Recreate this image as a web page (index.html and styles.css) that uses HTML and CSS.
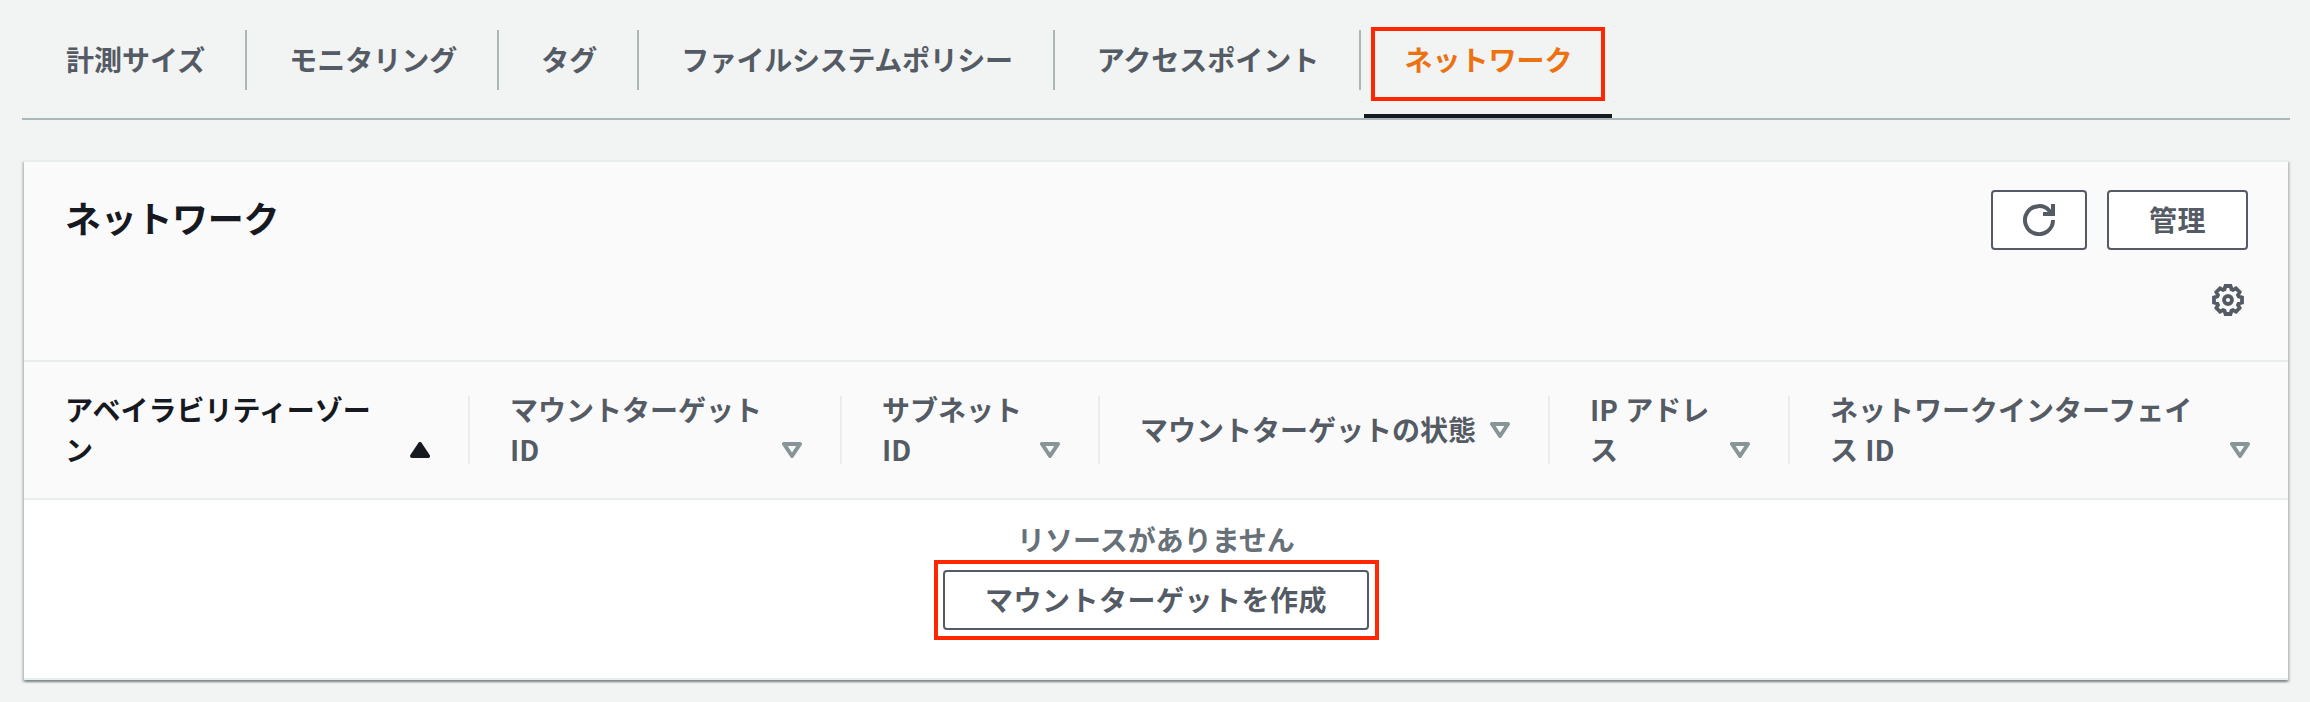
FILE: index.html
```html
<!DOCTYPE html>
<html lang="ja">
<head>
<meta charset="utf-8">
<title>ネットワーク</title>
<link rel="stylesheet" href="styles.css">
</head>
<body>
<nav class="tabs">
  <a class="tab">計測サイズ</a>
  <a class="tab">モニタリング</a>
  <a class="tab">タグ</a>
  <a class="tab tab-long">ファイルシステムポリシー</a>
  <a class="tab">アクセスポイント</a>
  <a class="tab tab-active">ネットワーク<span class="mark mark-tab"></span></a>
</nav>
<section class="card">
  <header class="card-head">
    <div class="title-row">
      <h2 class="title">ネットワーク</h2>
      <div class="actions">
        <button class="btn btn-icon" aria-label="更新">
          <svg class="icon" viewBox="0 0 16 16"><path d="M10 5h5V0M15 8a7 7 0 1 1-1.6-4.4L14.4 5" /></svg>
        </button>
        <button class="btn">管理</button>
      </div>
    </div>
    <div class="tools">
      <svg class="icon gear" viewBox="0 0 32 32"><path d="M13.5 2 18.5 2 19.5 5.3 21 6 24 4.4 27.6 8 26 11 26.7 12.5 30 13.5 30 18.5 26.7 19.5 26 21 27.6 24 24 27.6 21 26 19.5 26.7 18.5 30 13.5 30 12.5 26.7 11 26 8 27.6 4.4 24 6 21 5.3 19.5 2 18.5 2 13.5 5.3 12.5 6 11 4.4 8 8 4.4 11 6 12.5 5.3z"/><circle cx="16" cy="16" r="4"/></svg>
    </div>
  </header>
  <div class="thead">
    <div class="th th-sorted"><span class="label">アベイラビリティーゾー<br>ン</span><svg class="sort" viewBox="0 0 20 16"><path d="M10 2 18 14H2z"/></svg></div>
    <div class="th"><span class="label">マウントターゲット<br><span class="latin">ID</span></span><svg class="sort" viewBox="0 0 20 16"><path d="M2 2h16L10 14z"/></svg></div>
    <div class="th"><span class="label">サブネット<br><span class="latin">ID</span></span><svg class="sort" viewBox="0 0 20 16"><path d="M2 2h16L10 14z"/></svg></div>
    <div class="th"><span class="label">マウントターゲットの状態</span><svg class="sort" viewBox="0 0 20 16"><path d="M2 2h16L10 14z"/></svg></div>
    <div class="th"><span class="label"><span class="latin">IP</span> アドレ<br>ス</span><svg class="sort" viewBox="0 0 20 16"><path d="M2 2h16L10 14z"/></svg></div>
    <div class="th"><span class="label">ネットワークインターフェイ<br>ス <span class="latin">ID</span></span><svg class="sort" viewBox="0 0 20 16"><path d="M2 2h16L10 14z"/></svg></div>
  </div>
  <div class="empty">
    <p class="empty-text">リソースがありません</p>
    <button class="btn btn-create">マウントターゲットを作成<span class="mark mark-create"></span></button>
  </div>
</section>
</body>
</html>
```
FILE: styles.css
```css
* { box-sizing: border-box; }
body {
  margin: 0;
  padding: 0 20px 0 22px;
  height: 702px;
  overflow: hidden;
  background: #f2f3f3;
  color: #545b64;
  font: 700 28px/40px "Noto Sans", "Noto Sans CJK JP", sans-serif;
}
.tabs {
  display: flex;
  height: 120px;
  padding-top: 30px;
  border-bottom: 2px solid #aab7b8;
}
.tab {
  position: relative;
  height: 60px;
  padding: 10px 40px 0 42px;
  border-right: 2px solid #aab7b8;
  white-space: nowrap;
}
.tab:first-child { padding-left: 44px; }
.tab-long { letter-spacing: -.3px; }
.tab-active {
  height: 88px;
  color: #ec7211;
  border-right: 0;
  border-bottom: 4px solid #16191f;
  margin-left: 3px;
  padding: 10px 40px 0;
}
.mark { position: absolute; border: 4px solid #ff2600; }
.mark-tab { left: 7px; top: -3px; width: 234px; height: 74px; }
.card {
  width: 2264px;
  height: 520px;
  margin: 40px 0 0 2px;
  background: #fff;
  border-top: 2px solid #eaeded;
  border-bottom: 2px solid #eaeded;
  box-shadow: 0 2px 2px 0 rgba(0,28,36,.3), 2px 2px 2px 0 rgba(0,28,36,.15), -2px 2px 2px 0 rgba(0,28,36,.15);
}
.card-head {
  height: 200px;
  padding: 28px 40px 0 41px;
  background: #fafafa;
  border-bottom: 2px solid #eaeded;
}
.title-row { display: flex; justify-content: space-between; }
.title { margin: 0; font-size: 36px; line-height: 60px; letter-spacing: -.3px; color: #16191f; }
.actions { display: flex; gap: 20px; }
.btn {
  position: relative;
  height: 60px;
  padding: 0 40px;
  border: 2px solid #545b64;
  border-radius: 4px;
  background: #fff;
  color: #545b64;
  font: inherit;
  letter-spacing: .5px;
  white-space: nowrap;
}
.btn-icon { width: 96px; padding: 0 30px; }
.icon { display: block; width: 32px; height: 32px; fill: none; stroke: #545b64; stroke-width: 2; }
.gear { stroke-width: 3.8; }
.tools { display: flex; justify-content: flex-end; padding: 34px 4px 0 0; }
.thead {
  display: grid;
  grid-template-columns: 446px 372px 258px 450px 240px 498px;
  grid-template-rows: 68px;
  height: 138px;
  padding: 34px 0;
  background: #fafafa;
  border-bottom: 2px solid #eaeded;
}
.th {
  display: flex;
  align-items: center;
  justify-content: space-between;
  padding: 0 38px 0 40px;
  border-right: 2px solid #eaeded;
  white-space: nowrap;
}
.th:first-child { padding-left: 41px; }
.th:last-child { border-right: 0; }
.th-sorted { color: #16191f; }
.latin { font-family: "Noto Sans CJK JP", sans-serif; line-height: 1; }
.sort {
  flex: none;
  width: 20px;
  height: 16px;
  margin-top: 40px;
  fill: none;
  stroke: #879596;
  stroke-width: 4;
  stroke-linejoin: round;
}
.th:nth-child(4) .sort { margin-top: 0; }
.th-sorted .sort { fill: #16191f; stroke: #16191f; }
.empty { display: flex; flex-direction: column; align-items: center; padding-top: 20px; }
.empty-text { margin: 0 0 10px; color: #687078; }
.mark-create { left: -11px; top: -12px; width: 445px; height: 80px; }
```
